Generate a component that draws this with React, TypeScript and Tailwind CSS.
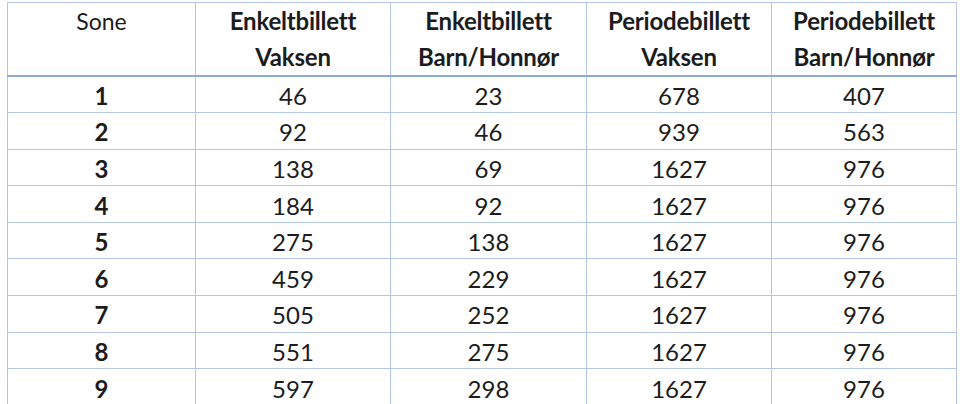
const rows: [string, string, string, string, string][] = [
  ['1', '46', '23', '678', '407'],
  ['2', '92', '46', '939', '563'],
  ['3', '138', '69', '1627', '976'],
  ['4', '184', '92', '1627', '976'],
  ['5', '275', '138', '1627', '976'],
  ['6', '459', '229', '1627', '976'],
  ['7', '505', '252', '1627', '976'],
  ['8', '551', '275', '1627', '976'],
  ['9', '597', '298', '1627', '976'],
]

const headers = [
  ['Enkeltbillett', 'Vaksen'],
  ['Enkeltbillett', 'Barn/Honnør'],
  ['Periodebillett', 'Vaksen'],
  ['Periodebillett', 'Barn/Honnør'],
]

export default function App() {
  return (
    <div className="h-[404px] w-[960px] overflow-hidden bg-white pl-[7px] pt-[2px] font-['Lato','Open_Sans',sans-serif] text-[24px] text-[#1c1c1c]">
      <table className="w-[949px] table-fixed border-collapse">
        <colgroup>
          <col className="w-[188px]" />
          <col className="w-[195px]" />
          <col className="w-[196px]" />
          <col className="w-[185px]" />
          <col className="w-[185px]" />
        </colgroup>
        <thead>
          <tr className="h-[72px] border-b-2 border-b-[#8eaadb]">
            <th className="border border-[#b4c6e7] align-top text-[23px] font-normal leading-[36px]">Sone</th>
            {headers.map(([a, b], i) => (
              <th key={i} className="border border-[#b4c6e7] align-top text-[24px] font-bold leading-[36px] tracking-[-0.2px]">
                <div>{a}</div>
                <div>{b}</div>
              </th>
            ))}
          </tr>
        </thead>
        <tbody>
          {rows.map((r) => (
            <tr key={r[0]} className="h-[36.6px]">
              {r.map((v, i) => (
                <td
                  key={i}
                  className={`border border-[#b4c6e7] pt-[3px] text-center leading-none ${i === 0 ? 'font-bold' : ''}`}
                >
                  {v}
                </td>
              ))}
            </tr>
          ))}
        </tbody>
      </table>
    </div>
  )
}
